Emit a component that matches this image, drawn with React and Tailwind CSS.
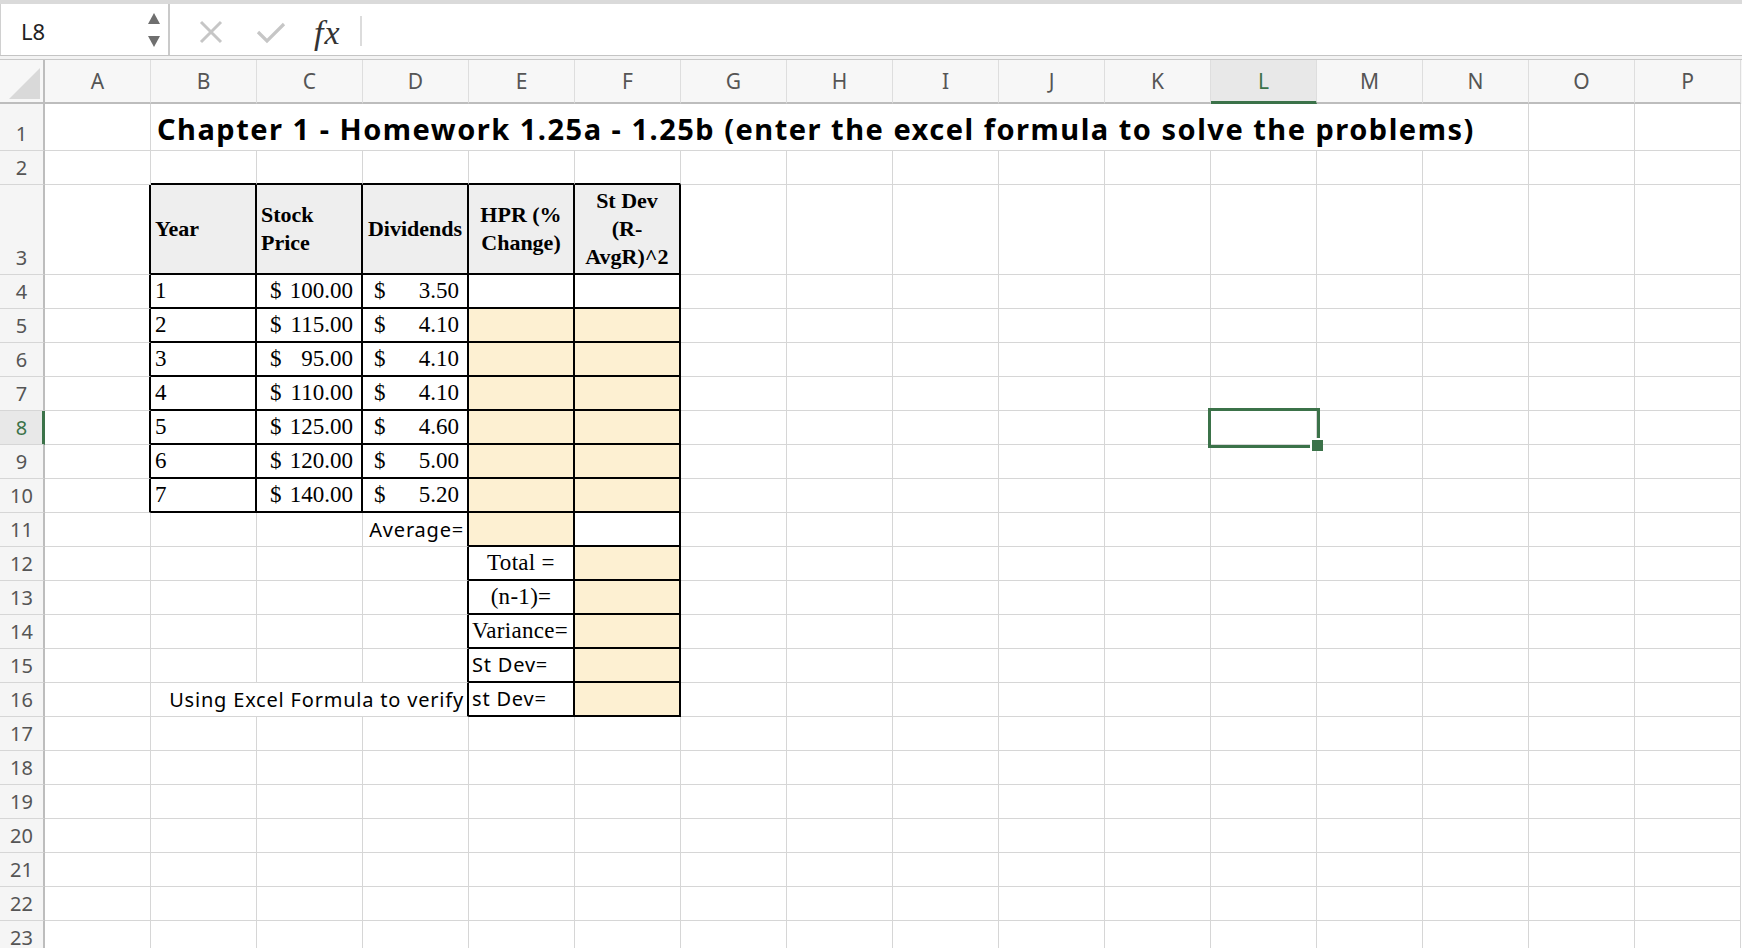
import React from "react";

const COLS = ["A","B","C","D","E","F","G","H","I","J","K","L","M","N","O","P"];
const ROW_H = { 1: 47, 2: 34, 3: 90 };
const rowH = (r) => ROW_H[r] || 34;

const boxed = (r, c) =>
  (r >= 3 && r <= 10 && c >= 1 && c <= 5) || (r >= 11 && r <= 16 && c >= 4 && c <= 5);

const prices = ["100.00", "115.00", "95.00", "110.00", "125.00", "120.00", "140.00"];
const divs = ["3.50", "4.10", "4.10", "4.10", "4.60", "5.00", "5.20"];

const serif = "font-['Liberation_Serif',serif] text-black";
const sans = "font-['Noto_Sans',sans-serif] text-black tracking-[0.8px]";

function cellContent(r, c) {
  if (r === 1 && c === 1)
    return (
      <div className="relative z-10 flex h-full items-end pl-[6px] pb-[1px]">
        <span className="whitespace-nowrap font-['Noto_Sans',sans-serif] text-[29px] font-bold leading-[40px] tracking-[1.5px] text-black">
          Chapter 1 - Homework 1.25a - 1.25b (enter the excel formula to solve the problems)
        </span>
      </div>
    );
  if (r === 3) {
    const hdr = `${serif} text-[22px] font-bold leading-[28px]`;
    if (c === 1) return <div className={`flex h-full items-center pl-[4px] ${hdr}`}>Year</div>;
    if (c === 2)
      return (
        <div className={`flex h-full items-center pl-[4px] ${hdr}`}>
          <span>Stock<br />Price</span>
        </div>
      );
    if (c === 3) return <div className={`flex h-full items-center justify-center ${hdr}`}>Dividends</div>;
    if (c === 4)
      return (
        <div className={`flex h-full items-center justify-center text-center ${hdr}`}>
          <span>HPR (%<br />Change)</span>
        </div>
      );
    if (c === 5)
      return (
        <div className={`flex h-full items-center justify-center text-center ${hdr}`}>
          <span>St Dev<br />(R-<br />AvgR)^2</span>
        </div>
      );
  }
  if (r >= 4 && r <= 10) {
    const i = r - 4;
    const t = `${serif} text-[23px] leading-[32px]`;
    if (c === 1) return <div className={`flex h-full items-end pl-[4px] ${t}`}>{i + 1}</div>;
    if (c === 2)
      return (
        <div className={`flex h-full items-end justify-between pl-[13px] pr-[8px] ${t}`}>
          <span>$</span>
          <span>{prices[i]}</span>
        </div>
      );
    if (c === 3)
      return (
        <div className={`flex h-full items-end justify-between pl-[11px] pr-[8px] ${t}`}>
          <span>$</span>
          <span>{divs[i]}</span>
        </div>
      );
  }
  if (r === 11 && c === 3)
    return (
      <div className={`flex h-full items-end justify-end pr-[3px] ${sans} text-[20px] leading-[32px]`}>
        Average=
      </div>
    );
  if (r === 16 && c === 3)
    return (
      <div className={`relative z-10 flex h-full items-end justify-end pr-[3px] ${sans} text-[20px] leading-[32px]`}>
        <span className="whitespace-nowrap">Using Excel Formula to verify</span>
      </div>
    );
  if (c === 4) {
    const t = `${serif} text-[23px] leading-[32px] tracking-[0.3px]`;
    if (r === 12) return <div className={`flex h-full items-end justify-center ${t}`}>Total =</div>;
    if (r === 13) return <div className={`flex h-full items-end justify-center ${t}`}>(n-1)=</div>;
    if (r === 14) return <div className={`flex h-full items-end pl-[3px] ${t}`}>Variance=</div>;
    if (r === 15)
      return <div className={`flex h-full items-end pl-[3px] ${sans} text-[20px] leading-[32px]`}>St Dev=</div>;
    if (r === 16)
      return <div className={`flex h-full items-end pl-[3px] ${sans} text-[20px] leading-[32px]`}>st Dev=</div>;
  }
  return null;
}

function cellBg(r, c) {
  if (r === 3 && c >= 1 && c <= 5) return "bg-[#eeeeee]";
  if (r >= 5 && r <= 10 && (c === 4 || c === 5)) return "bg-[#fdf0d2]";
  if (r === 11 && c === 4) return "bg-[#fdf0d2]";
  if (r >= 12 && r <= 16 && c === 5) return "bg-[#fdf0d2]";
  return "";
}

function Cell({ r, c }) {
  const rightBlack = boxed(r, c) || boxed(r, c + 1);
  const bottomBlack = boxed(r, c) || boxed(r + 1, c);
  const noRight = (r === 1 && c >= 1 && c <= 12) || (r === 16 && (c === 1 || c === 2));
  let rb = "border-r border-r-[#d6d6d6]";
  if (rightBlack) rb = "border-r-2 border-r-black";
  else if (noRight) rb = "";
  const bb = bottomBlack ? "border-b-2 border-b-black" : "border-b border-b-[#d6d6d6]";
  return (
    <div className={`w-[106px] shrink-0 h-full ${rb} ${bb} ${cellBg(r, c)}`}>
      {cellContent(r, c)}
    </div>
  );
}

function RowHeader({ r }) {
  const sel = r === 8;
  return (
    <div
      className={`relative w-[45px] shrink-0 h-full flex items-end justify-center border-r-2 border-b ${
        sel ? "bg-[#e8e8e8] border-r-[#3b7249]" : "bg-[#f5f5f5] border-r-[#bdbdbd]"
      } border-b-[#d6d6d6]`}
    >
      {sel && <div className="absolute right-[-2px] top-0 h-full w-[3px] bg-[#3b7249]" />}
      <span
        className={`font-['Noto_Sans',sans-serif] text-[20px] leading-[32px] ${
          sel ? "text-[#3b7249]" : "text-[#555555]"
        }`}
      >
        {r}
      </span>
    </div>
  );
}

export default function App() {
  const rows = Array.from({ length: 23 }, (_, i) => i + 1);
  return (
    <div className="relative w-[1742px] h-[948px] overflow-hidden bg-white">
      {/* Formula bar */}
      <div className="h-[4px] bg-[#dadada]" />
      <div className="flex h-[52px] border-b border-b-[#c4c4c4]">
        <div className="relative flex w-[170px] shrink-0 items-center border-r-2 border-r-[#cacaca] border-l border-l-[#d0d0d0]">
          <span className="pl-[20px] pt-[4px] font-['Noto_Sans',sans-serif] text-[22px] text-[#222222]">L8</span>
          <svg className="absolute left-[146px] top-[8px]" width="14" height="36" viewBox="0 0 14 36">
            <polygon points="7,1 13,12 1,12" fill="#6f6f6f" />
            <polygon points="1,24 13,24 7,35" fill="#6f6f6f" />
          </svg>
        </div>
        <div className="relative flex flex-1 items-center">
          <svg className="absolute left-[29px] top-[16px]" width="24" height="24" viewBox="0 0 24 24">
            <path d="M2 2 L22 22 M22 2 L2 22" stroke="#c6c6c6" strokeWidth="3" fill="none" />
          </svg>
          <svg className="absolute left-[86px] top-[18px]" width="30" height="22" viewBox="0 0 30 22">
            <path d="M2 10 L11 19 L28 2" stroke="#c6c6c6" strokeWidth="3.2" fill="none" />
          </svg>
          <span className="absolute left-[144px] top-[3px] font-['Liberation_Serif',serif] text-[34px] italic tracking-[1px] text-[#333333]">
            fx
          </span>
          <div className="absolute left-[190px] top-[12px] h-[30px] w-[2px] bg-[#dcdcdc]" />
        </div>
      </div>
      <div className="h-[4px] bg-[#f3f3f3] border-b border-b-[#c8c8c8]" />

      {/* Column header */}
      <div className="flex h-[44px] bg-[#f7f7f7]">
        <div className="relative w-[45px] shrink-0 border-r-2 border-r-[#bdbdbd] border-b-2 border-b-[#bdbdbd]">
          <svg className="absolute left-[9px] top-[8px]" width="31" height="31" viewBox="0 0 31 31">
            <polygon points="31,0 31,31 0,31" fill="#d9d9d9" />
          </svg>
        </div>
        {COLS.map((l) =>
          l === "L" ? (
            <div
              key={l}
              className="flex w-[106px] shrink-0 items-center justify-center border-r border-r-[#dedede] border-b-[3px] border-b-[#3b7249] bg-[#e8e8e8]"
            >
              <span className="pt-[2px] font-['Noto_Sans',sans-serif] text-[21px] text-[#3b7249]">{l}</span>
            </div>
          ) : (
            <div
              key={l}
              className="flex w-[106px] shrink-0 items-center justify-center border-r border-r-[#dedede] border-b-2 border-b-[#bdbdbd]"
            >
              <span className="pt-[2px] font-['Noto_Sans',sans-serif] text-[21px] text-[#555555]">{l}</span>
            </div>
          )
        )}
      </div>

      {/* Body */}
      {rows.map((r) => (
        <div key={r} className="flex" style={{ height: rowH(r) }}>
          <RowHeader r={r} />
          {COLS.map((_, c) => (
            <Cell key={c} r={r} c={c} />
          ))}
        </div>
      ))}

      {/* Selection */}
      <div className="absolute left-[1208px] top-[408px] h-[40px] w-[112px] border-[3px] border-[#3b7249]" />
      <div className="absolute left-[1310px] top-[438px] h-[13px] w-[13px] border-l-2 border-t-2 border-white bg-[#3b7249]" />
    </div>
  );
}
